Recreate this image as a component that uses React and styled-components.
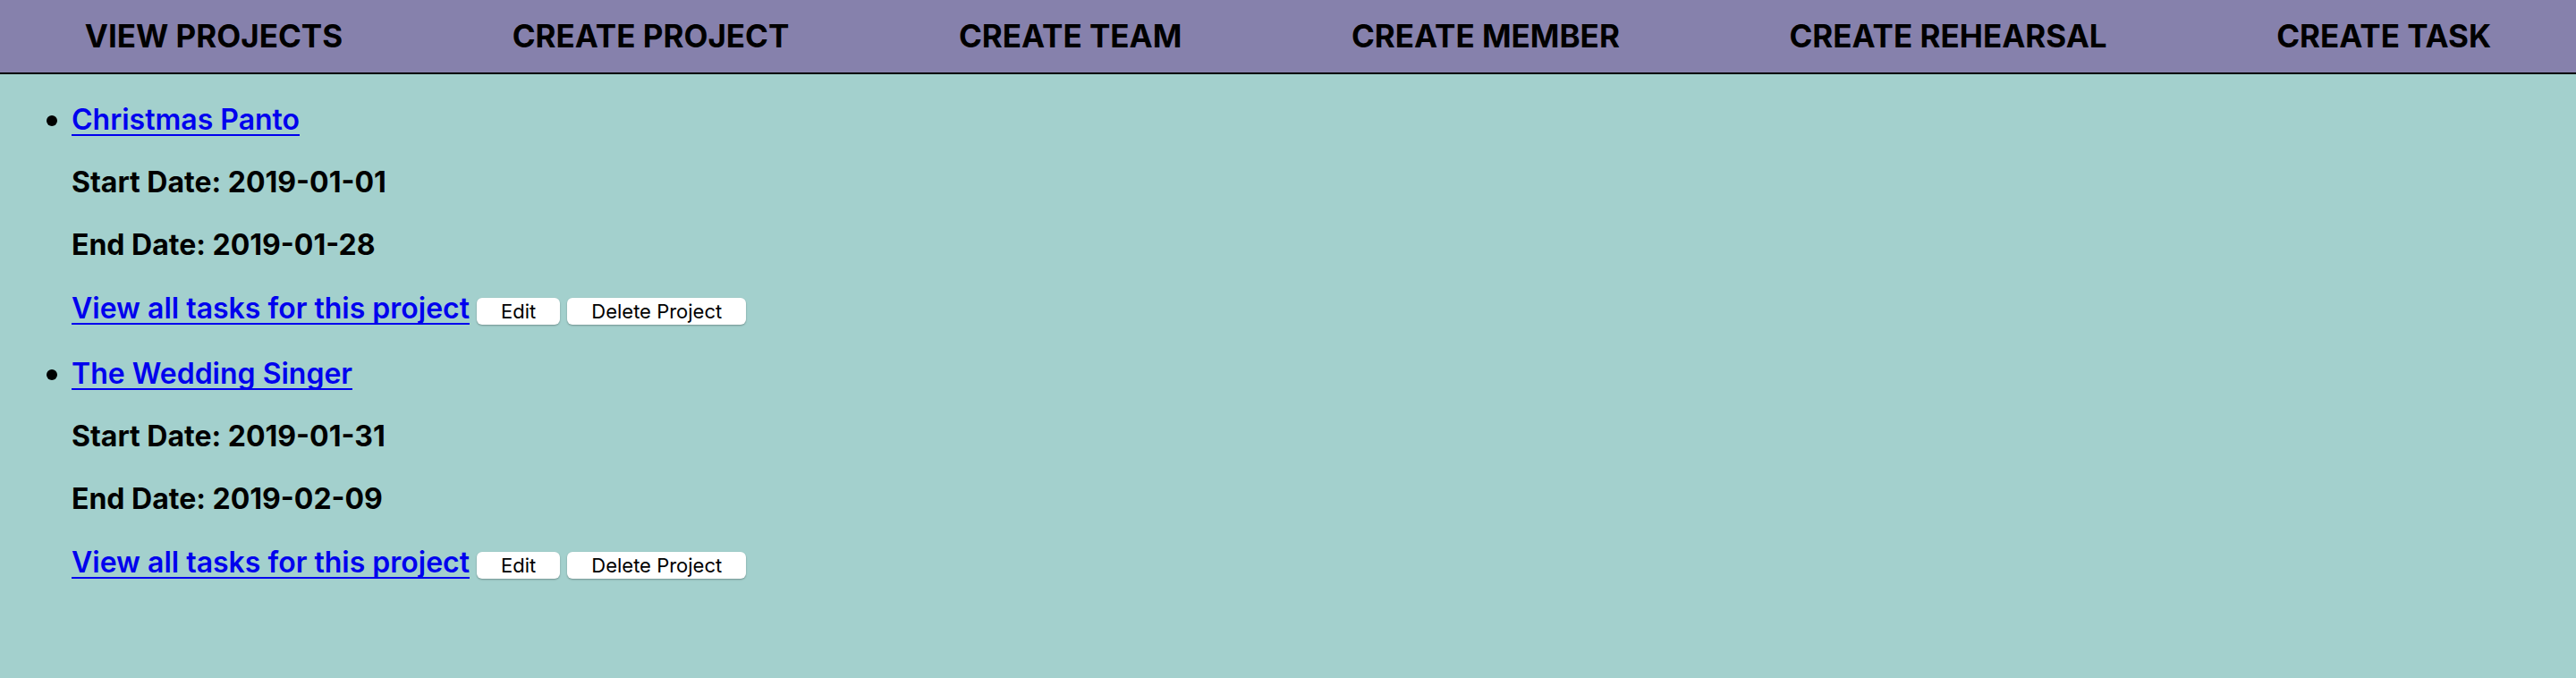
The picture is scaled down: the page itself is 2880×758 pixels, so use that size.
import React from "react";
import styled, { createGlobalStyle } from "styled-components";

const GlobalStyle = createGlobalStyle`
  body {
    margin: 0;
    min-height: 100vh;
    background: #a3d0cd;
    color: #000;
    font-family: Inter, "Liberation Sans", sans-serif;
    font-weight: 600;
    font-size: 32px;
    line-height: 38px;
  }
`;

const NavBar = styled.nav`
  border-bottom: 2px solid #000;
  background: #8681ac;
`;

const NavList = styled.ul`
  display: flex;
  justify-content: space-around;
  margin: 0;
  padding: 20px 0;
  list-style: none;
`;

const NavLink = styled.a`
  display: block;
  color: #000;
  font-size: 35px;
  font-weight: 700;
  line-height: 41px;
  text-decoration: none;
  text-transform: uppercase;
`;

const ProjectList = styled.ul`
  margin: 32px 0;
  padding: 0 0 0 80px;
  list-style: none;
`;

const Project = styled.li`
  margin-bottom: 36px;

  &::before {
    content: "";
    display: inline-block;
    width: 12px;
    height: 12px;
    margin: 0 16px 0 -28px;
    border-radius: 50%;
    background: #000;
    vertical-align: 4px;
  }
`;

const TextLink = styled.a`
  display: inline-block;
  border-bottom: 2px solid #0000ee;
  color: #0000ee;
  line-height: 32px;
  text-decoration: none;
`;

const Detail = styled.p`
  margin: 32px 0;
  font-weight: 700;
`;

const Actions = styled.div`
  display: flex;
  align-items: flex-end;
  gap: 8px;
  min-height: 38px;
`;

const Button = styled.button`
  height: 30px;
  padding: 0 27px;
  border: 0;
  border-radius: 6px;
  background: #fff;
  box-shadow: 0 1px 2px rgba(0, 0, 0, 0.3);
  color: #000;
  font: 400 22px/30px Inter, "Liberation Sans", sans-serif;
`;

const links = ["View Projects", "Create Project", "Create Team", "Create Member", "Create Rehearsal", "Create Task"];

const projects = [
  { name: "Christmas Panto", start: "2019-01-01", end: "2019-01-28" },
  { name: "The Wedding Singer", start: "2019-01-31", end: "2019-02-09" },
];

export default function App() {
  return (
    <>
      <GlobalStyle />
      <NavBar>
        <NavList>
          {links.map((label) => (
            <li key={label}>
              <NavLink href="#">{label}</NavLink>
            </li>
          ))}
        </NavList>
      </NavBar>
      <main>
        <ProjectList>
          {projects.map((project) => (
            <Project key={project.name}>
              <TextLink href="#">{project.name}</TextLink>
              <Detail>Start Date: {project.start}</Detail>
              <Detail>End Date: {project.end}</Detail>
              <Actions>
                <TextLink href="#">View all tasks for this project</TextLink>
                <Button type="button">Edit</Button>
                <Button type="button">Delete Project</Button>
              </Actions>
            </Project>
          ))}
        </ProjectList>
      </main>
    </>
  );
}
